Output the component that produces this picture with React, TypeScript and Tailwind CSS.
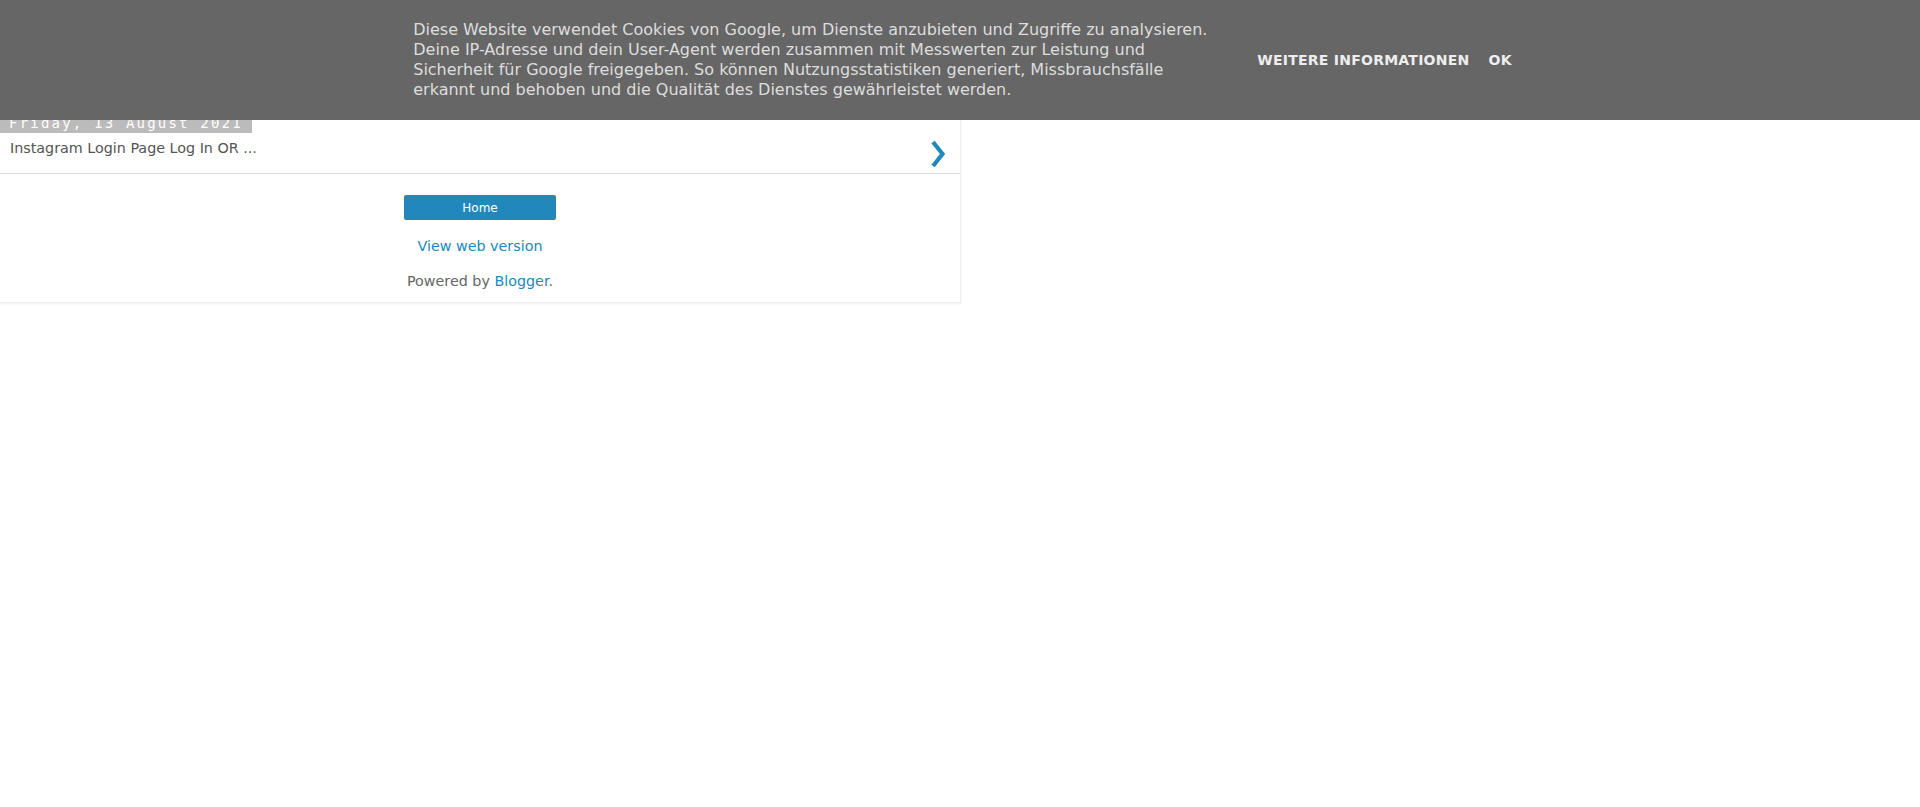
import React from "react";

function Chevron() {
    return (
        <svg width="16" height="28" viewBox="0 0 16 28" className="mt-[11px] shrink-0">
            <path d="M3 2 L12.5 14 L3 26" fill="none" stroke="#2288bb" strokeWidth="4.2" strokeLinejoin="miter" />
        </svg>
    );
}

function CookieBar() {
    return (
        <div className="fixed top-0 left-0 z-50 flex h-[120px] w-full items-center justify-center bg-[#666666] pl-[5px]">
            {/* Notice text */}
            <div className="w-[800px] text-[16px] leading-[20px] text-[#dddddd]">
                Diese Website verwendet Cookies von Google, um Dienste anzubieten und Zugriffe zu analysieren.
                Deine IP-Adresse und dein User-Agent werden zusammen mit Messwerten zur Leistung und Sicherheit für
                Google freigegeben. So können Nutzungsstatistiken generiert, Missbrauchsfälle erkannt und behoben und
                die Qualität des Dienstes gewährleistet werden.
            </div>

            {/* Buttons */}
            <div className="ml-[44px] flex gap-[19px] text-[14px] font-bold uppercase tracking-[0.25px] text-[#eeeeee]">
                <a href="#">Weitere Informationen</a>
                <a href="#">Ok</a>
            </div>
        </div>
    );
}

export default function App() {
    return (
        <div className="min-h-[807px] w-full bg-white font-['DejaVu_Sans',sans-serif]">
            <CookieBar />

            <div className="w-[961px] border-r border-b border-[#eeeeee] bg-white shadow-[0_1px_2px_rgba(0,0,0,0.06)]">
                {/* Hidden header area under the cookie bar */}
                <div className="h-[111px]" />

                {/* Date header */}
                <div className="h-[18px]">
                    <span className="inline-block bg-[#bbbbbb] pl-[9px] pr-[9px] pb-[1px] font-['DejaVu_Sans_Mono',monospace] text-[14px] leading-[17px] tracking-[2.2px] text-white">
                        Friday, 13 August 2021
                    </span>
                </div>

                {/* Post row */}
                <a href="#" className="flex items-start justify-between border-b border-[#dddddd] pl-[10px] pr-[14px]">
                    <span className="pt-[9px] pb-[15px] text-[14.3px] leading-[20px] text-[#555555]">
                        Instagram Login Page Log In OR ...
                    </span>
                    <Chevron />
                </a>

                {/* Footer */}
                <div className="flex flex-col items-center pt-[21px] pb-[11px]">
                    <a
                        href="#"
                        className="flex h-[25px] w-[152px] items-center justify-center rounded-[2px] bg-[#2288bb] text-[12px] text-white"
                    >
                        Home
                    </a>
                    <a href="#" className="mt-[16px] text-[14.3px] leading-[20px] text-[#2288bb]">
                        View web version
                    </a>
                    <div className="mt-[15px] text-[14.3px] leading-[20px] text-[#666666]">
                        Powered by <a href="#" className="text-[#2288bb]">Blogger</a>.
                    </div>
                </div>
            </div>
        </div>
    );
}
